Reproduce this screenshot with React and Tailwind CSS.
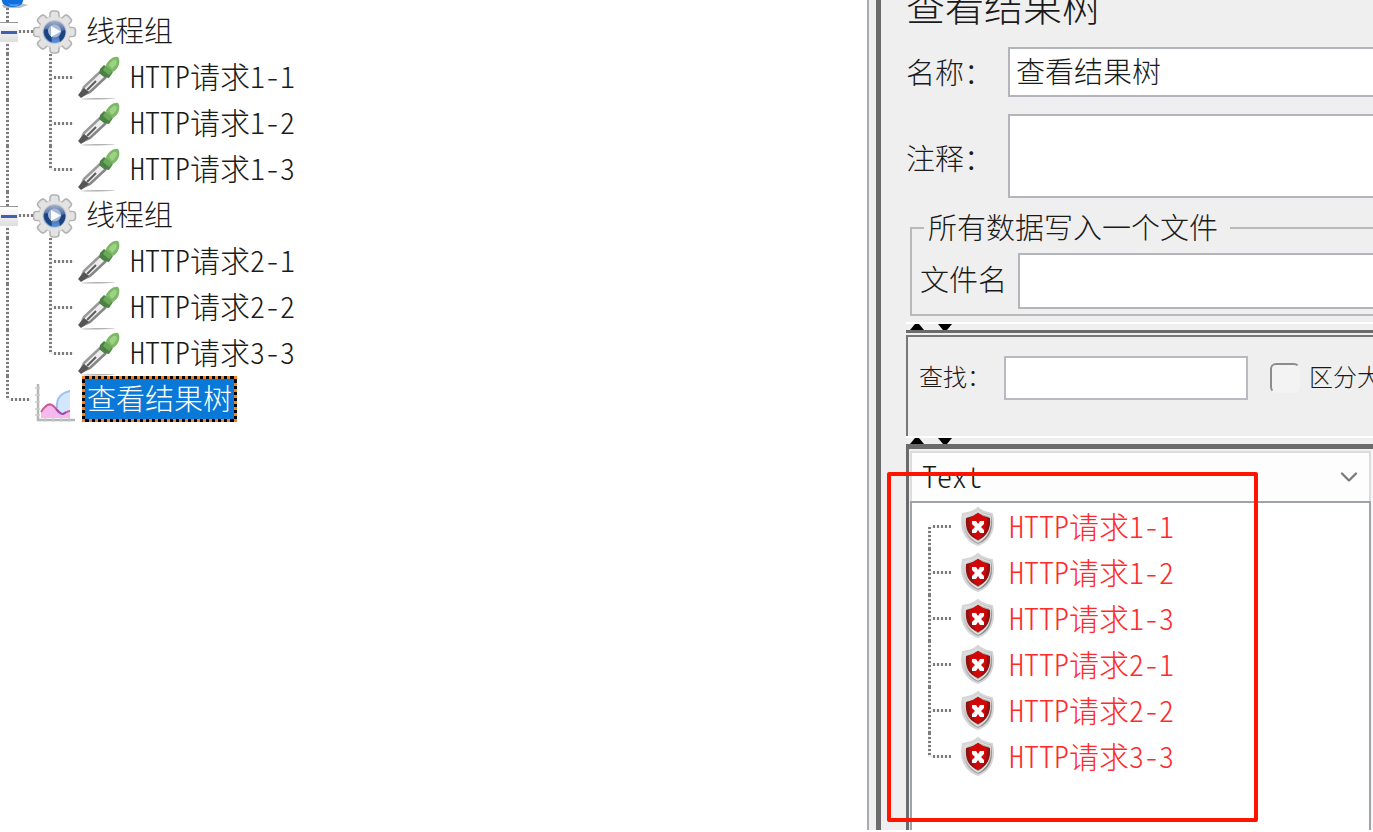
import React from 'react';
import { ChevronDown } from 'lucide-react';
import clsx from 'clsx';

const threadGroups = [
  { id: 'g1', name: '线程组', samplers: ['HTTP请求1-1', 'HTTP请求1-2', 'HTTP请求1-3'] },
  { id: 'g2', name: '线程组', samplers: ['HTTP请求2-1', 'HTTP请求2-2', 'HTTP请求3-3'] },
];

const results = threadGroups.flatMap((group) => group.samplers);

const toothAngles = [0, 45, 90, 135, 180, 225, 270, 315];

const GearIcon = () => (
  <svg viewBox="0 0 44 46" className="w-11 h-[46px] shrink-0" aria-hidden="true">
    <defs>
      <linearGradient id="gearCore" x1="0" y1="0" x2="0" y2="1">
        <stop offset="0" stopColor="#a3b1c9" />
        <stop offset="0.5" stopColor="#3a5f9d" />
        <stop offset="1" stopColor="#5c93dc" />
      </linearGradient>
    </defs>
    {toothAngles.map((angle) => (
      <rect
        key={angle}
        x="17"
        y="3"
        width="9"
        height="12"
        rx="3"
        fill="#e3e3e3"
        stroke="#b3b3b3"
        strokeWidth="1.6"
        transform={`rotate(${angle} 21.5 24)`}
      />
    ))}
    <circle cx="21.5" cy="24" r="16" fill="#e1e1e1" stroke="#bfbfbf" strokeWidth="0.8" />
    {toothAngles.map((angle) => (
      <rect key={angle} x="18" y="5" width="7" height="8" fill="#e3e3e3" transform={`rotate(${angle} 21.5 24)`} />
    ))}
    <circle cx="21.5" cy="24" r="12" fill="#c4c8d0" />
    <circle cx="21.5" cy="24" r="11" fill="url(#gearCore)" />
    <path d="M11 22c0 7 4 11 8 12l-1-8-4-5zM32 22c1 5-1 9-5 12l-1-5 3-6z" fill="#1d437f" />
    <circle cx="21.5" cy="23" r="6.500" fill="#a5b8d6" />
    <path d="M18 18l10 5.500L18 29z" fill="#f8fafd" />
  </svg>
);

const DropperIcon = () => (
  <svg viewBox="0 0 44 46" className="w-11 h-[46px] shrink-0" aria-hidden="true">
    <path d="M2 45c12-1.500 28-1.200 36-.5-10 1-26 1.500-36 .5z" fill="#b4b4b4" />
    <path d="M22 17l7 6L11 39l-9 4 2-9z" fill="#ededed" />
    <path d="M22 18L6 33l-3 7" fill="none" stroke="#9a9a9a" strokeWidth="2.500" />
    <path d="M28 23L12 38l-9 4" fill="none" stroke="#868686" strokeWidth="2.500" />
    <path d="M18 27L9 36" stroke="#5c5c5c" strokeWidth="2" />
    <path d="M0 41l6-7 5 4-8 6z" fill="#555555" />
    <path d="M22 15l4-4 9 7-4 6-5-1-5-4z" fill="#4c8145" />
    <path d="M25 16l3-5 7 6-4 4z" fill="#6ba858" />
    <path d="M28 11c3-6 8-9 12-8 3 3 1 12-5 15z" fill="#7cb866" />
    <path d="M31 11c2-4 5-6 7-5 2 2 0 6-4 9z" fill="#9dd284" />
  </svg>
);

const ChartIcon = () => (
  <svg viewBox="0 0 42 46" className="w-[42px] h-[46px] shrink-0" aria-hidden="true">
    <path d="M3 8v36h37" fill="none" stroke="#b6b6b6" strokeWidth="2.500" />
    <path d="M0 12h5M0 19h5M0 26h5M0 33h5M0 39h5M10 46v-4M18 46v-4M26 46v-4M34 46v-4" stroke="#cccccc" strokeWidth="1.500" />
    <path d="M22 30c0-7 4-13 13-14v22H24z" fill="#d3e6fb" />
    <path d="M22 32c-1-10 4-15 13-17" fill="none" stroke="#9dc3f5" strokeWidth="2" />
    <path d="M6 42v-6c4-5 8-8 11-7 4 3 6 9 10 9 3-1 5-3 8-3v7z" fill="#f6b9ee" />
    <path d="M6 36c4-6 8-9 11-7 4 2 7 9 11 9 3-1 4-3 7-3" fill="none" stroke="#cc5a93" strokeWidth="2" />
    <path d="M21 33c2 3 4 5 7 5l3-2" fill="none" stroke="#8c55b5" strokeWidth="2" />
  </svg>
);

const ShieldIcon = () => (
  <svg viewBox="0 0 36 46" className="w-9 h-[46px] shrink-0" aria-hidden="true">
    <defs>
      <linearGradient id="shieldRim" x1="0" y1="0" x2="1" y2="1">
        <stop offset="0" stopColor="#f0f0f0" />
        <stop offset="0.5" stopColor="#b2b2b2" />
        <stop offset="1" stopColor="#6d6d6d" />
      </linearGradient>
    </defs>
    <path d="M19 5c4 4 9 5 14 6 3 13 0 26-14 31C5 37 1 24 4 11c6-1 11-2 15-6z" fill="url(#shieldRim)" stroke="#d6d6d6" strokeWidth="2" />
    <path d="M19 8c4 3 8 4 12 5 1 11-2 21-12 26C9 34 6 24 7 13c4-1 8-2 12-5z" fill="none" stroke="#e0e0e0" strokeWidth="1.500" />
    <path d="M19 10l5 3 7 2c1 11-3 18-12 22C9 33 6 26 7 15l7-2z" fill="#8f1212" />
    <path d="M19 10l5 3 4 2c0 10-2 16-9 22-7-6-9-12-9-22l4-2z" fill="#d00808" />
    <path d="M13 18h4l2 3 2-3h4v3l-3 3 3 3v3h-4l-2-3-2 3h-4v-3l3-3-3-3z" fill="#ffffff" />
  </svg>
);

// dotted connector pieces shared by both trees
const VLine = ({ half, className }) => (
  <span
    className={clsx(
      'w-[3px] shrink-0 self-start bg-[repeating-linear-gradient(to_bottom,#7c7c7c_0_2px,#f2f2f2_2px_4px)]',
      half ? 'h-6' : 'h-full',
      className,
    )}
  />
);

const HLine = ({ className }) => (
  <span
    className={clsx(
      'h-[3px] shrink-0 bg-[repeating-linear-gradient(to_right,#f2f2f2_0_2px,#7c7c7c_2px_4px)]',
      className,
    )}
  />
);

const Expander = () => (
  <button
    type="button"
    aria-label="折叠"
    className="absolute left-0 top-3.5 flex h-5 w-[18px] items-center border-t border-[#979797] bg-linear-to-b from-white to-[#dedede] px-px"
  >
    <span className="h-[3px] w-full bg-[#3f5fb0]" />
  </button>
);

const TestPlanTree = () => (
  <nav className="overflow-hidden bg-white">
    <ul className="-mt-[38px] text-[29px] leading-[46px]">
      <li className="flex h-[46px] items-end">
        <svg viewBox="0 0 28 46" className="h-[46px] w-7" aria-hidden="true">
          <path d="M2 43l22-1 4 1-8 3H4z" fill="#b9bcc2" />
          <path d="M1 36h23l-2 6c-5 4-14 4-19 0z" fill="#0f6fdc" />
          <path d="M8 41c4 2 8 2 12 0l-3 3h-6z" fill="#49a3f5" />
        </svg>
      </li>
      {threadGroups.map((group) => (
        <li key={group.id}>
          <div className="relative flex h-[46px] items-center">
            <VLine className="ml-1.5" />
            <HLine className="w-6" />
            <Expander />
            <GearIcon />
            <span className="ml-[9px] pb-1">{group.name}</span>
          </div>
          <ul className="text-[30px]">
            {group.samplers.map((name, i) => (
              <li key={name} className="flex h-[46px] items-center">
                <VLine className="ml-1.5" />
                <VLine className="ml-10" half={i === group.samplers.length - 1} />
                <HLine className="w-[22px]" />
                <span className="ml-1"><DropperIcon /></span>
                <span className="ml-2 pb-1">{name}</span>
              </li>
            ))}
          </ul>
        </li>
      ))}
      <li className="flex h-[46px] items-center">
        <VLine className="ml-1.5" half />
        <HLine className="w-[22px]" />
        <span className="ml-1"><ChartIcon /></span>
        <button
          type="button"
          className="ml-[5px] border-3 border-dotted border-[#f08228] bg-black bg-clip-border"
        >
          <span className="block h-10 bg-[#0a78d7] px-0.5 leading-9 text-white">查看结果树</span>
        </button>
      </li>
    </ul>
  </nav>
);

const SplitBar = ({ thick }) => (
  <div className="border-t-2 border-white">
    <div className="flex h-1.5 gap-3.5 pl-1">
      <svg viewBox="0 0 14 6" className="h-1.5 w-3.5" aria-hidden="true">
        <path d="M0 6l5-6h4l5 6z" fill="#000000" />
      </svg>
      <svg viewBox="0 0 14 6" className="h-1.5 w-3.5" aria-hidden="true">
        <path d="M0 0h14l-5 6H5z" fill="#000000" />
      </svg>
    </div>
    <div className={clsx('bg-[#6b6b6b]', thick ? 'h-[5px]' : 'h-[3px]')} />
  </div>
);

const fieldClass = 'min-w-0 flex-1 border-2 border-r-0 border-[#b4b4bb] bg-white outline-none';

const SearchPanel = () => (
  <div className="mt-0.5 flex h-[101px] items-start border-l-2 border-t-2 border-[#777777] pl-[11px] pt-[19px] text-2xl leading-10">
    <label htmlFor="find" className="w-[85px] shrink-0">查找：</label>
    <input id="find" className="h-11 w-[244px] shrink-0 border-2 border-[#b9b9c0] bg-white px-2 outline-none" />
    <input
      id="case"
      type="checkbox"
      className="ml-[22px] mt-[7px] size-[30px] shrink-0 appearance-none rounded-md border-2 border-b-transparent border-l-[#8c8c8c] border-r-transparent border-t-[#8c8c8c] bg-[#f3f3f3]"
    />
    <label htmlFor="case" className="ml-[9px] whitespace-nowrap">区分大</label>
  </div>
);

const ResultPanel = () => (
  <div className="relative flex min-h-0 flex-1 border-l-3 border-[#6b6b6b]">
    <div className="flex min-w-0 flex-1 flex-col pl-px pt-0.5">
      <div className="relative">
        <select
          aria-label="Text"
          className="h-[50px] w-full appearance-none border-2 border-b-0 border-[#dcdcdc] bg-[#fdfdfd] pb-1 pl-2.5 text-[30px] outline-none [font-feature-settings:'hwid']"
        >
          <option>Text</option>
        </select>
        <ChevronDown className="pointer-events-none absolute right-2 top-3 size-7 text-[#7a7a7a]" strokeWidth={2} />
      </div>
      <ul className="flex-1 border-2 border-b-0 border-[#9ea2a9] bg-white text-[30px] leading-[46px] text-[#ff2a2a]">
        {results.map((name, i) => (
          <li key={name} className="flex h-[46px] items-center pl-4">
            <VLine half={i === results.length - 1} className={clsx(i === 0 && 'mt-6 h-[22px]!')} />
            <HLine className="w-5" />
            <span className="ml-2"><ShieldIcon /></span>
            <span className="ml-3.5 pb-0.5">{name}</span>
          </li>
        ))}
      </ul>
    </div>
    <div className="w-0.5 bg-[#f6f6f6]" />
    <div className="pointer-events-none absolute -left-[22px] top-[23px] h-[350px] w-[371px] rounded-xs border-4 border-[#ff1400]" />
  </div>
);

const ResultTreeView = () => (
  <main className="flex min-h-0 min-w-0 flex-col overflow-hidden border-l-2 border-[#a7abb2] bg-[#efefef] pl-[7px]">
    <div className="flex min-h-0 flex-1 flex-col border-l-5 border-[#6b6b6b] pl-[25px] text-[29px]">
      <h1 className="-mt-4 text-[39px] leading-10">查看结果树</h1>
      <div className="mt-[23px] flex h-[50px] items-center">
        <label htmlFor="name" className="w-[102px] shrink-0">名称：</label>
        <input id="name" defaultValue="查看结果树" className={clsx(fieldClass, 'h-full px-1.5 pb-1')} />
      </div>
      <div className="mt-[17px] flex h-[84px] items-center">
        <label htmlFor="comment" className="w-[102px] shrink-0 pt-1">注释：</label>
        <textarea id="comment" className={clsx(fieldClass, 'h-full resize-none px-1.5')} />
      </div>
      <fieldset className="ml-1 mt-4 min-w-0 border-2 border-r-0 border-[#b9b9b9] pb-[5px] pl-2">
        <legend className="ml-1 h-7 pl-1 pr-3 leading-6">所有数据写入一个文件</legend>
        <div className="mt-[11px] flex h-14 items-center">
          <label htmlFor="file" className="w-[98px] shrink-0 pb-1">文件名</label>
          <input id="file" className={clsx(fieldClass, 'h-full px-1.5')} />
        </div>
      </fieldset>
      <div className="mt-1.5 flex min-h-0 flex-1 flex-col">
        <SplitBar />
        <SearchPanel />
        <SplitBar thick />
        <ResultPanel />
      </div>
    </div>
  </main>
);

const App = () => (
  <div className="grid h-screen grid-cols-[867fr_506fr] overflow-hidden bg-white pb-0.5 font-['Noto_Sans_CJK_SC',sans-serif] font-light text-[#1a1a1a] [font-feature-settings:'hwid']">
    <TestPlanTree />
    <ResultTreeView />
  </div>
);

export default App;
